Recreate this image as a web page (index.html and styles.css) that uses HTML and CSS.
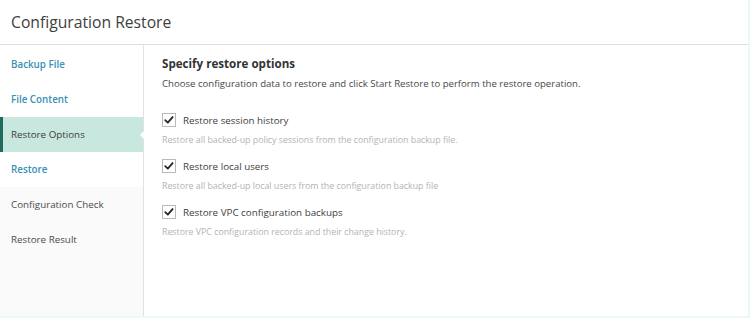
FILE: index.html
```html
<!DOCTYPE html>
<html>
<head>
<meta charset="utf-8">
<link rel="stylesheet" href="styles.css">
</head>
<body>
<div class="app">
  <header class="title-bar">
    <h1 class="title">Configuration Restore</h1>
  </header>
  <div class="body">
    <nav class="steps">
      <a class="step link">Backup File</a>
      <a class="step link">File Content</a>
      <a class="step active">Restore Options</a>
      <a class="step link">Restore</a>
      <a class="step muted">Configuration Check</a>
      <a class="step muted">Restore Result</a>
      <div class="steps-fill"></div>
    </nav>
    <main class="panel">
      <h2 class="panel-title">Specify restore options</h2>
      <p class="panel-intro">Choose configuration data to restore and click Start Restore to perform the restore operation.</p>
      <div class="options">
        <div class="option">
          <label class="option-row">
            <span class="checkbox"><svg viewBox="0 0 14 14" width="12" height="12"><path d="M2.6 7.2 L5.6 10 L11.2 3.6" fill="none" stroke="#2a2a2a" stroke-width="2.2" stroke-linecap="round" stroke-linejoin="round"/></svg></span>
            <span class="option-label">Restore session history</span>
          </label>
          <div class="option-desc">Restore all backed-up policy sessions from the configuration backup file.</div>
        </div>
        <div class="option">
          <label class="option-row">
            <span class="checkbox"><svg viewBox="0 0 14 14" width="12" height="12"><path d="M2.6 7.2 L5.6 10 L11.2 3.6" fill="none" stroke="#2a2a2a" stroke-width="2.2" stroke-linecap="round" stroke-linejoin="round"/></svg></span>
            <span class="option-label">Restore local users</span>
          </label>
          <div class="option-desc">Restore all backed-up local users from the configuration backup file</div>
        </div>
        <div class="option">
          <label class="option-row">
            <span class="checkbox"><svg viewBox="0 0 14 14" width="12" height="12"><path d="M2.6 7.2 L5.6 10 L11.2 3.6" fill="none" stroke="#2a2a2a" stroke-width="2.2" stroke-linecap="round" stroke-linejoin="round"/></svg></span>
            <span class="option-label">Restore VPC configuration backups</span>
          </label>
          <div class="option-desc">Restore VPC configuration records and their change history.</div>
        </div>
      </div>
    </main>
  </div>
</div>
</body>
</html>
```

FILE: styles.css
```css
* { box-sizing: border-box; }
html, body { margin: 0; padding: 0; background: #ffffff; }
body {
  font-family: "Open Sans", "Noto Sans", "DejaVu Sans", sans-serif;
  color: #444;
}
.app {
  width: 750px;
  height: 318px;
  display: flex;
  flex-direction: column;
  border-right: 2px solid #eaf8fc;
  border-bottom: 2px solid #ecf9f6;
  overflow: hidden;
}
.title-bar {
  height: 45px;
  flex: none;
  border-bottom: 1px solid #dedede;
  display: flex;
  align-items: center;
  padding-left: 11px;
}
.title {
  margin: 0;
  font-size: 15.7px;
  font-weight: 400;
  color: #404040;
}
.body {
  flex: 1;
  display: flex;
  min-height: 0;
}
.steps {
  width: 144px;
  flex: none;
  border-right: 1px solid #e2e2e2;
  display: flex;
  flex-direction: column;
  padding-top: 2px;
  background: #ffffff;
}
.step {
  height: 35px;
  display: flex;
  align-items: center;
  padding-left: 11px;
  font-size: 9.8px;
  color: #444;
  position: relative;
}
.step.link {
  color: #3a8fb6;
  font-weight: 600;
}
.step.active {
  background: #c8e7de;
  color: #3c3c3c;
  border-left: 3px solid #236a5e;
  padding-left: 8px;
}
.step.active::after {
  content: "";
  position: absolute;
  right: -1px;
  top: 50%;
  margin-top: -4px;
  border-top: 4px solid transparent;
  border-bottom: 4px solid transparent;
  border-right: 4px solid #ffffff;
}
.step.muted {
  background: #fafafa;
  color: #4a4a4a;
}
.steps-fill {
  flex: 1;
  background: #fafafa;
}
.panel {
  flex: 1;
  padding: 10px 18px 0 18px;
}
.panel-title {
  margin: 0;
  font-size: 11.6px;
  line-height: 18px;
  font-weight: 700;
  color: #333;
}
.panel-intro {
  margin: 4px 0 0 0;
  font-size: 9.6px;
  line-height: 14px;
  color: #484848;
}
.options {
  margin-top: 22px;
  display: flex;
  flex-direction: column;
  gap: 13px;
}
.option-row {
  display: flex;
  align-items: center;
  gap: 7px;
  height: 14px;
}
.checkbox {
  width: 14px;
  height: 14px;
  border: 1px solid #b9b9b9;
  background: #fff;
  display: flex;
  align-items: center;
  justify-content: center;
  flex: none;
}
.option-label {
  font-size: 9.8px;
  color: #404040;
}
.option-desc {
  margin-top: 7px;
  font-size: 8.8px;
  line-height: 12px;
  color: #b3b3b3;
}
```
